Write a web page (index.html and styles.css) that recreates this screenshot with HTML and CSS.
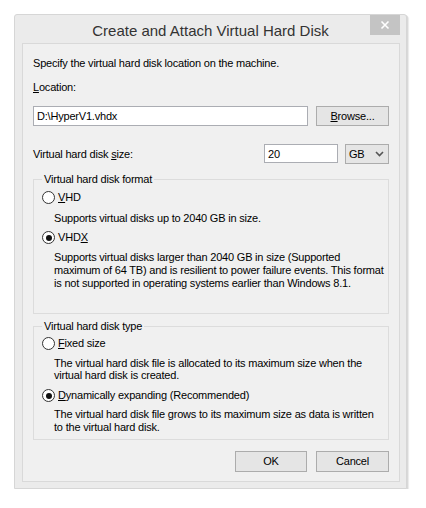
FILE: index.html
```html
<!DOCTYPE html>
<html>
<head>
<meta charset="utf-8">
<link rel="stylesheet" href="styles.css">
</head>
<body>
<div class="window">
  <div class="titlebar">
    <span class="spacer"></span>
    <div class="title">Create and Attach Virtual Hard Disk</div>
    <div class="close-wrap">
      <div class="close">
        <svg width="10" height="10" viewBox="0 0 10 10"><path d="M1.5 1.5 L8.5 8.5 M8.5 1.5 L1.5 8.5" stroke="#fff" stroke-width="1.6" fill="none"/></svg>
      </div>
    </div>
  </div>
  <div class="client">
    <p class="text intro">Specify the virtual hard disk location on the machine.</p>
    <p class="text loc-label"><u>L</u>ocation:</p>
    <div class="row loc-row">
      <div class="textbox loc-box">D:\HyperV1.vhdx</div>
      <div class="button browse"><span><u>B</u>rowse...</span></div>
    </div>
    <div class="row size-row">
      <span class="text size-label">Virtual hard disk <u>s</u>ize:</span>
      <div class="textbox size-box">20</div>
      <div class="combo"><span>GB</span>
        <svg width="9" height="6" viewBox="0 0 9 6"><path d="M1 1 L4.5 4.5 L8 1" stroke="#555" stroke-width="1.6" fill="none"/></svg>
      </div>
    </div>
    <fieldset class="group g-format">
      <legend>Virtual hard disk format</legend>
      <div class="radio-row r-vhd"><span class="radio"></span><span class="rlabel"><u>V</u>HD</span></div>
      <p class="desc d-vhd">Supports virtual disks up to 2040 GB in size.</p>
      <div class="radio-row r-vhdx"><span class="radio checked"></span><span class="rlabel">VHD<u>X</u></span></div>
      <p class="desc d-vhdx">Supports virtual disks larger than 2040 GB in size (Supported<br>maximum of 64 TB) and is resilient to power failure events. This format<br>is not supported in operating systems earlier than Windows 8.1.</p>
    </fieldset>
    <fieldset class="group g-type">
      <legend>Virtual hard disk type</legend>
      <div class="radio-row r-fixed"><span class="radio"></span><span class="rlabel"><u>F</u>ixed size</span></div>
      <p class="desc d-fixed">The virtual hard disk file is allocated to its maximum size when the<br>virtual hard disk is created.</p>
      <div class="radio-row r-dyn"><span class="radio checked"></span><span class="rlabel"><u>D</u>ynamically expanding (Recommended)</span></div>
      <p class="desc d-dyn">The virtual hard disk file grows to its maximum size as data is written<br>to the virtual hard disk.</p>
    </fieldset>
    <div class="actions">
      <div class="button ok"><span>OK</span></div>
      <div class="button cancel"><span>Cancel</span></div>
    </div>
  </div>
</div>
</body>
</html>
```
FILE: styles.css
```css
* { box-sizing: border-box; }
html, body { margin: 0; padding: 0; background: #ffffff; }
body {
  font-family: "Liberation Sans", Arial, sans-serif;
  font-size: 11px;
  letter-spacing: -0.2px;
  color: #000;
}
u { text-decoration: underline; text-underline-offset: 1px; }

.window {
  margin: 14px 0 0 14px;
  width: 393px;
  background: #ebebeb;
  border: 1px solid #d6d6d6;
  border-radius: 3px 3px 0 0;
  box-shadow: 1px 1px 0 #d9d9d9, 2px 2px 1px #eaeaea;
  display: flex;
  flex-direction: column;
}

.titlebar {
  height: 28px;
  display: grid;
  grid-template-columns: 1fr auto 1fr;
  align-items: start;
}
.title {
  font-size: 15px;
  letter-spacing: 0;
  color: #333;
  line-height: 20px;
  padding-top: 6px;
}
.close-wrap {
  display: flex;
  justify-content: flex-end;
  padding-right: 6px;
}
.close {
  width: 30px;
  height: 20px;
  background: #c4c4c4;
  display: flex;
  align-items: center;
  justify-content: center;
}

.client {
  margin: 0 6px 6px 7px;
  background: #f0f0f0;
  border: 1px solid #d9d9d9;
  padding: 0 10px 9px 10px;
}

.text { margin: 0; line-height: 13px; }
.intro { margin-top: 13px; }
.loc-label { margin-top: 11px; }

.row { display: flex; align-items: center; height: 20px; }
.loc-row { margin-top: 12px; gap: 8px; }
.size-row { margin-top: 18px; }
.size-label { flex: 1; line-height: 13px; }

.textbox {
  height: 20px;
  background: #fff;
  border: 1px solid #abadb3;
  padding: 0 3px;
  line-height: 18px;
}
.loc-box { width: 275px; }
.size-box { width: 74px; height: 19px; align-self: flex-start; margin-right: 7px; }

.button {
  background: #e5e5e5;
  border: 1px solid #acacac;
  display: flex;
  align-items: center;
  justify-content: center;
  line-height: 13px;
}
.browse { width: 73px; height: 20px; }

.combo {
  width: 44px;
  height: 20px;
  background: #e5e5e5;
  border: 1px solid #acacac;
  display: flex;
  align-items: center;
  justify-content: space-between;
  padding: 0 4px 0 3px;
}

.group {
  margin: 0;
  border: 1px solid #dcdcdc;
  padding: 0 8px 0 8px;
  min-width: 0;
}
.group legend {
  padding: 0 2px;
  line-height: 13px;
}
.g-format { margin-top: 9px; padding-bottom: 23px; }
.g-type { margin-top: 6px; padding-bottom: 5px; }

.radio-row {
  display: flex;
  align-items: center;
  height: 13px;
  line-height: 13px;
}
.radio {
  width: 13px;
  height: 13px;
  border: 1px solid #333;
  border-radius: 50%;
  background: #fff;
  margin-right: 3px;
  display: flex;
  align-items: center;
  justify-content: center;
}
.radio.checked::after {
  content: "";
  width: 6px;
  height: 6px;
  border-radius: 50%;
  background: #111;
}
.desc {
  margin: 0;
  line-height: 13px;
  padding-left: 12px;
  white-space: nowrap;
}
.r-vhd { margin-top: 5px; }
.d-vhd { margin-top: 8px; }
.r-vhdx { margin-top: 6px; }
.d-vhdx { margin-top: 7px; }
.r-fixed { margin-top: 4px; }
.d-fixed { margin-top: 7px; line-height: 12px; }
.r-dyn { margin-top: 8px; }
.d-dyn { margin-top: 6px; }

.actions {
  margin-top: 11px;
  display: flex;
  justify-content: flex-end;
  gap: 9px;
}
.ok { width: 72px; height: 21px; }
.cancel { width: 73px; height: 21px; }
```
